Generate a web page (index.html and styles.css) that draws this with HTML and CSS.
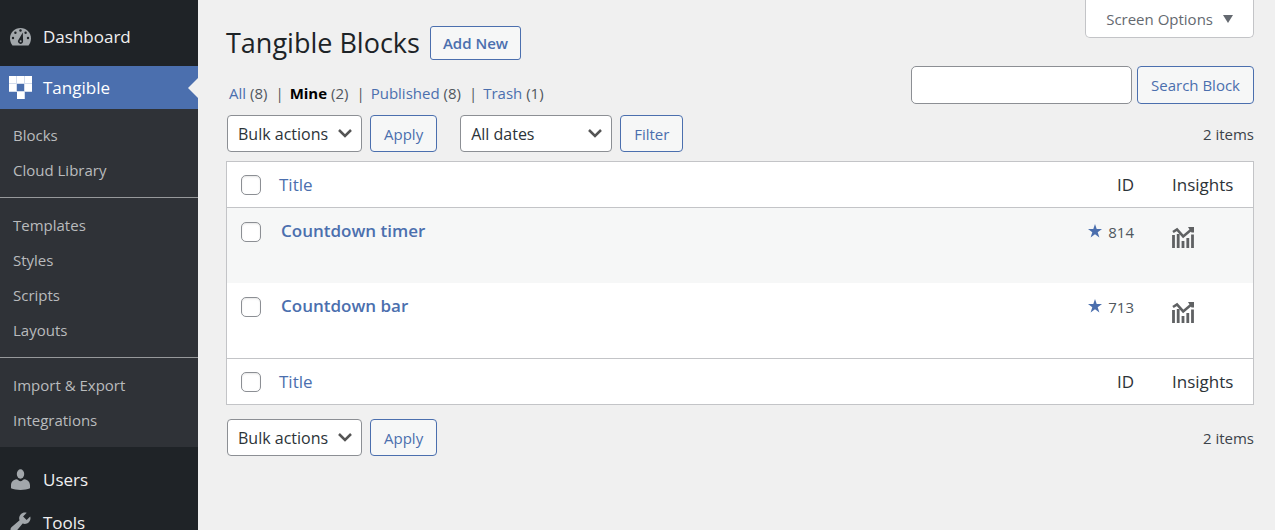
FILE: index.html
```html
<!DOCTYPE html>
<html lang="en">
<head>
<meta charset="utf-8">
<title>Tangible Blocks</title>
<link rel="stylesheet" href="styles.css">
</head>
<body>
<svg class="sprite" aria-hidden="true">
  <symbol id="insights" viewBox="0 0 24 24">
    <path d="M1.500 9v13M6.200 8v14M11 15v7M15.800 12v10M20.500 8.500v13.500" fill="none" stroke="currentColor" stroke-width="2.800"/>
    <path d="M1 6l4-2.600 6.200 7L20 3" fill="none" stroke="currentColor" stroke-width="2.600"/>
    <path d="M16 1H22V6.500H19.500z" fill="currentColor"/>
  </symbol>
</svg>
<div class="layout">
  <nav class="sidebar" aria-label="Main menu">
    <a class="menu-item" href="#">
      <svg class="menu-icon" viewBox="0 0 25 25" aria-hidden="true">
        <path fill="currentColor" d="M4.500 21.500C3 19.500 2 17 2 14.500 2 8.500 6.700 4 12.500 4S23 8.500 23 14.500c0 2.500-1 5-2.500 7z"/>
        <g fill="#1f2327"><circle cx="12.500" cy="6.500" r="1.200"/><circle cx="7.400" cy="8.800" r="1.200"/><circle cx="17.600" cy="8.800" r="1.200"/><circle cx="5" cy="14" r="1.200"/><circle cx="20" cy="14" r="1.200"/><path d="M14.800 8.500l.3 8.500a2.600 2.600 0 1 1-4.600-1.300z"/></g>
        <circle cx="12.600" cy="17.300" r="1" fill="currentColor"/>
      </svg>
      Dashboard
    </a>
    <a class="menu-item menu-item-current" href="#" aria-current="true">
      <svg class="menu-icon" viewBox="0 0 25 25" aria-hidden="true"><path fill="#d3dcec" d="M1 1h23v16h-7v7H9v-7H1z"/><path fill="#fff" d="M1 1h7v7H1zM9 1h7v7H9zM17 1h7v7h-7zM1 9h7v7H1zM17 9h7v7h-7zM9 17h7v7H9z"/><path fill="#4b6fae" d="M9 9h7v7H9z"/></svg>
      Tangible
    </a>
    <div class="submenu">
      <ul class="submenu-group">
        <li><a href="#">Blocks</a></li>
        <li><a href="#">Cloud Library</a></li>
      </ul>
      <ul class="submenu-group">
        <li><a href="#">Templates</a></li>
        <li><a href="#">Styles</a></li>
        <li><a href="#">Scripts</a></li>
        <li><a href="#">Layouts</a></li>
      </ul>
      <ul class="submenu-group">
        <li><a href="#">Import &amp; Export</a></li>
        <li><a href="#">Integrations</a></li>
      </ul>
    </div>
    <a class="menu-item" href="#">
      <svg class="menu-icon" viewBox="0 0 25 25" aria-hidden="true"><ellipse cx="12.500" cy="7" rx="3.700" ry="4.700" fill="currentColor"/><path fill="currentColor" d="M8.500 12.200c1.200 0 2.500 2 4 2s2.800-2 4-2c3.200.3 5.500 3 5.500 6v3c-2.500 1.200-6 1.700-9.500 1.700S5.500 22.400 3 21.200v-3c0-3 2.300-5.700 5.500-6z"/></svg>
      Users
    </a>
    <a class="menu-item" href="#">
      <svg class="menu-icon" viewBox="0 0 20 20" aria-hidden="true"><path fill="currentColor" d="M16.680 9.770c-1.340 1.340-3.300 1.670-4.950.99l-5.410 6.520c-.99.990-2.590.99-3.580 0s-.99-2.590 0-3.570l6.520-5.420c-.68-1.650-.35-3.610.99-4.950 1.280-1.280 3.120-1.620 4.720-1.060l-2.890 2.890 2.820 2.820 2.860-2.870c.53 1.580.18 3.390-1.080 4.650z"/></svg>
      Tools
    </a>
  </nav>

  <main class="content">
    <header class="top">
      <div class="top-start">
        <div class="heading">
          <h1>Tangible Blocks</h1>
          <a class="button button-strong" href="#">Add New</a>
        </div>
        <ul class="views">
          <li><a href="#">All</a> (8)</li>
          <li><a class="current" href="#" aria-current="page">Mine</a> (2)</li>
          <li><a href="#">Published</a> (8)</li>
          <li><a href="#">Trash</a> (1)</li>
        </ul>
      </div>
      <div class="top-end">
        <button class="screen-options" type="button">Screen Options
          <svg class="caret" viewBox="0 0 10 8" aria-hidden="true"><path fill="currentColor" d="M0 0h10L5 8z"/></svg>
        </button>
        <form class="search">
          <input class="search-input" type="search" aria-label="Search Block">
          <button class="button search-button" type="button">Search Block</button>
        </form>
      </div>
    </header>

    <div class="tablenav">
      <div class="actions">
        <select class="select" aria-label="Select bulk action"><option>Bulk actions</option></select>
        <button class="button" type="button">Apply</button>
      </div>
      <div class="actions">
        <select class="select select-dates" aria-label="Filter by date"><option>All dates</option></select>
        <button class="button" type="button">Filter</button>
      </div>
      <span class="count">2 items</span>
    </div>

    <table class="list">
      <thead>
        <tr>
          <th class="col-check"><input class="checkbox" type="checkbox" aria-label="Select all"></th>
          <th class="col-title"><a href="#">Title</a></th>
          <th class="col-id">ID</th>
          <th class="col-insights">Insights</th>
        </tr>
      </thead>
      <tbody>
        <tr>
          <td class="col-check"><input class="checkbox" type="checkbox" aria-label="Select Countdown timer"></td>
          <td class="col-title"><a href="#">Countdown timer</a></td>
          <td class="col-id"><svg class="star" viewBox="0 0 14 14" aria-hidden="true"><path fill="currentColor" d="M7 0l1.700 5.100H14L9.700 8.300l1.700 5.200L7 10.300l-4.400 3.200 1.700-5.200L0 5.100h5.300z"/></svg>814</td>
          <td class="col-insights"><svg class="chart" aria-hidden="true"><use href="#insights"/></svg></td>
        </tr>
        <tr>
          <td class="col-check"><input class="checkbox" type="checkbox" aria-label="Select Countdown bar"></td>
          <td class="col-title"><a href="#">Countdown bar</a></td>
          <td class="col-id"><svg class="star" viewBox="0 0 14 14" aria-hidden="true"><path fill="currentColor" d="M7 0l1.700 5.100H14L9.700 8.300l1.700 5.200L7 10.300l-4.400 3.200 1.700-5.200L0 5.100h5.300z"/></svg>713</td>
          <td class="col-insights"><svg class="chart" aria-hidden="true"><use href="#insights"/></svg></td>
        </tr>
      </tbody>
      <tfoot>
        <tr>
          <th class="col-check"><input class="checkbox" type="checkbox" aria-label="Select all"></th>
          <th class="col-title"><a href="#">Title</a></th>
          <th class="col-id">ID</th>
          <th class="col-insights">Insights</th>
        </tr>
      </tfoot>
    </table>

    <div class="tablenav tablenav-bottom">
      <div class="actions">
        <select class="select" aria-label="Select bulk action"><option>Bulk actions</option></select>
        <button class="button" type="button">Apply</button>
      </div>
      <span class="count">2 items</span>
    </div>
  </main>
</div>
</body>
</html>
```
FILE: styles.css
```css
* {
  box-sizing: border-box;
}

html,
body {
  height: 100%;
}

body {
  margin: 0;
  overflow: hidden;
  background: #f0f0f0;
  color: #3c434a;
  font: 15px/20px "Open Sans", "Noto Sans", sans-serif;
}

a {
  color: #4b6fae;
  text-decoration: none;
}

ul {
  margin: 0;
  padding: 0;
  list-style: none;
}

button,
input,
select {
  margin: 0;
  font: inherit;
}

.sprite {
  display: none;
}

.layout {
  display: flex;
  height: 100%;
}

/* Sidebar */
.sidebar {
  flex: none;
  width: 198px;
  padding-top: 15px;
  overflow: hidden;
  background: #1f2327;
}

.menu-item {
  display: flex;
  align-items: center;
  gap: 10px;
  height: 43px;
  padding-left: 8px;
  color: #f0f0f1;
  font-size: 17px;
  line-height: 17px;
}

.menu-icon {
  width: 25px;
  height: 25px;
  color: #a2a7ab;
}

.menu-item-current {
  margin-top: 8px;
  background: #4b6fae;
  color: #fff;
}

.menu-item-current::after {
  content: "";
  margin-left: auto;
  border: 10px solid transparent;
  border-left-width: 0;
  border-right-color: #f0f0f0;
}

.submenu {
  margin-bottom: 11px;
  padding: 9px 0;
  background: #2f3237;
}

.submenu-group + .submenu-group {
  margin-top: 9px;
  padding-top: 10px;
  border-top: 1px solid #97999b;
}

.submenu a {
  display: block;
  padding-left: 13px;
  color: #b9bbbd;
  line-height: 35px;
}

/* Page header */
.content {
  flex: 1;
  min-width: 0;
  padding: 0 21px 0 28px;
}

.top {
  display: flex;
  justify-content: space-between;
  margin-bottom: 11px;
}

.top-start {
  padding-top: 26px;
}

.heading {
  display: flex;
  align-items: center;
  gap: 10px;
  margin-bottom: 23px;
}

h1 {
  margin: 0;
  color: #1d2327;
  font-size: 27px;
  font-weight: 400;
  line-height: 34px;
}

.button {
  display: inline-flex;
  align-items: center;
  height: 37px;
  padding: 0 13px;
  border: 1px solid #4b6fae;
  border-radius: 4px;
  background: #f6f7f7;
  color: #4b6fae;
}

.button-strong {
  height: 34px;
  padding: 0 12px;
  border-radius: 3px;
  font-weight: 600;
}

.views {
  display: flex;
  padding-left: 3px;
  color: #50575e;
}

.views li + li::before {
  content: "|";
  margin: 0 6px 0 8px;
}

.views .current {
  color: #000;
  font-weight: 700;
}

.top-end {
  display: flex;
  flex-direction: column;
  align-items: flex-end;
  gap: 28px;
}

.screen-options {
  display: flex;
  align-items: center;
  gap: 10px;
  height: 38px;
  padding: 0 20px;
  border: 1px solid #c3c4c7;
  border-top: 0;
  border-radius: 0 0 5px 5px;
  background: #fff;
  color: #646970;
}

.caret {
  width: 10px;
  height: 8px;
}

.search {
  display: flex;
  gap: 5px;
}

.search-input {
  width: 221px;
  height: 38px;
  border: 1px solid #8c8f94;
  border-radius: 5px;
  background: #fff;
}

.search-button {
  height: 38px;
}

/* Controls above and below the table */
.tablenav {
  display: flex;
  align-items: center;
  gap: 23px;
  padding-left: 1px;
  margin-bottom: 9px;
}

.tablenav-bottom {
  margin-top: 14px;
}

.actions {
  display: flex;
  gap: 8px;
}

.select {
  width: 135px;
  height: 37px;
  padding: 0 10px;
  border: 1px solid #8c8f94;
  border-radius: 4px;
  appearance: none;
  background: #fff url("data:image/svg+xml,%3Csvg xmlns='http://www.w3.org/2000/svg' width='14' height='9'%3E%3Cpath d='M1 1l6 6 6-6' fill='none' stroke='%23555' stroke-width='2.500'/%3E%3C/svg%3E") no-repeat right 9px center;
  color: #2c3338;
  font-size: 16px;
}

.select-dates {
  width: 152px;
}

.count {
  margin-left: auto;
}

/* Blocks table */
.list {
  width: 100%;
  border: 1px solid #c3c4c7;
  border-spacing: 0;
  background: #fff;
}

.list th,
.list td {
  padding: 0;
  text-align: left;
  font-weight: 400;
}

.list th {
  height: 46px;
  color: #2c3338;
  font-size: 17px;
}

.list thead th {
  border-bottom: 1px solid #c3c4c7;
}

.list tfoot th {
  border-top: 1px solid #c3c4c7;
}

.list td {
  height: 75px;
  padding-top: 14px;
  color: #50575e;
  vertical-align: top;
}

.list tbody tr:first-child {
  background: #f6f7f7;
}

.list .col-check {
  width: 52px;
  padding-left: 14px;
}

.list td.col-title {
  padding-top: 13px;
  padding-left: 2px;
  font-size: 17px;
}

td.col-title a {
  font-weight: 600;
}

.list .col-id {
  width: 120px;
  padding-right: 38px;
  text-align: right;
}

.list .col-insights {
  width: 81px;
}

.list td.col-insights {
  padding-top: 18px;
}

.checkbox {
  display: block;
  width: 20px;
  height: 20px;
  border: 1px solid #8c8f94;
  border-radius: 5px;
  appearance: none;
  background: #fff;
  box-shadow: inset 0 1px 2px rgba(0, 0, 0, 0.1);
}

.star {
  width: 14px;
  height: 14px;
  margin-right: 6px;
  color: #4b6fae;
}

.chart {
  display: block;
  width: 24px;
  height: 24px;
  color: #5f6163;
}
```
